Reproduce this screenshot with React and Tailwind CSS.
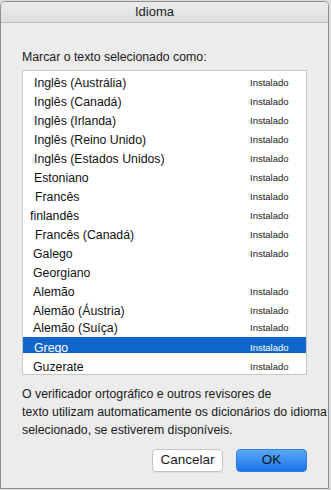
import React from 'react';

const languages = [
  { name: 'Inglês (Austrália)', installed: true, pad: 'pl-[11px]' },
  { name: 'Inglês (Canadá)', installed: true, pad: 'pl-[11px]' },
  { name: 'Inglês (Irlanda)', installed: true, pad: 'pl-[11px]' },
  { name: 'Inglês (Reino Unido)', installed: true, pad: 'pl-[11px]' },
  { name: 'Inglês (Estados Unidos)', installed: true, pad: 'pl-[11px]' },
  { name: 'Estoniano', installed: true, pad: 'pl-[11px]' },
  { name: 'Francês', installed: true, pad: 'pl-[12px]' },
  { name: 'finlandês', installed: true, pad: 'pl-[7px]' },
  { name: 'Francês (Canadá)', installed: true, pad: 'pl-[12px]' },
  { name: 'Galego', installed: true, pad: 'pl-[10px]' },
  { name: 'Georgiano', installed: false, pad: 'pl-[10px]' },
  { name: 'Alemão', installed: true, pad: 'pl-[10px]' },
  { name: 'Alemão (Áustria)', installed: true, pad: 'pl-[10px]' },
  { name: 'Alemão (Suíça)', installed: true, pad: 'pl-[10px]', row: 'h-[17px] pb-[1px]' },
  { name: 'Grego', installed: true, pad: 'pl-[11px]', selected: true, row: 'h-[16px] pt-[6px]' },
  { name: 'Guzerate', installed: true, pad: 'pl-[10px]', row: 'h-[21px] pt-[6px]' },
];

const App = () => {
  return (
    <div
      className="w-[331px] h-[490px] bg-[#dcdcdc] pt-[1px] pr-[2px] pb-[1px]"
      style={{ fontFamily: '"Liberation Sans", Arial, sans-serif' }}
    >
      <div className="h-full flex flex-col bg-[#ececec] border border-[#8e8e8e] rounded-t-[5px] overflow-hidden">
        {/* Title bar */}
        <div className="h-[21px] flex items-center justify-center pr-[20px] bg-gradient-to-b from-[#ececec] to-[#dedede] border-b border-[#b9b9b9] text-[13px] text-[#222]">
          Idioma
        </div>

        <div className="flex flex-col px-[21px]">
          <div className="mt-[26px] text-[12.3px] text-[#1a1a1a] leading-[16px] whitespace-nowrap">
            Marcar o texto selecionado como:
          </div>

          {/* List */}
          <div className="mt-[5px] h-[305px] bg-white border border-[#c6c6c6] overflow-hidden pt-[2px]">
            {languages.map((lang) => (
              <div
                key={lang.name}
                className={`flex items-center justify-between pr-[17px] ${lang.pad} ${lang.row || 'h-[19px]'} ${
                  lang.selected ? 'bg-[#0f67cc] text-white' : 'text-[#111]'
                }`}
              >
                <span className="text-[12.3px] leading-[16px] whitespace-nowrap">{lang.name}</span>
                {lang.installed && (
                  <span className={`w-[39px] text-[9.5px] leading-[12px] ${lang.selected ? 'text-white' : 'text-[#222]'}`}>
                    Instalado
                  </span>
                )}
              </div>
            ))}
          </div>

          <p className="mt-[10px] text-[12.3px] leading-[18px] text-[#1a1a1a] whitespace-nowrap">
            O verificador ortográfico e outros revisores de
            <br />
            texto utilizam automaticamente os dicionários do idioma
            <br />
            selecionado, se estiverem disponíveis.
          </p>

          {/* Buttons */}
          <div className="mt-[10px] flex justify-end gap-[13px]">
            <button className="w-[71px] h-[23px] bg-white border border-[#c3c3c3] rounded-[4px] text-[13.5px] text-[#1a1a1a] shadow-[0_1px_0_rgba(0,0,0,0.05)]">
              Cancelar
            </button>
            <button className="w-[71px] h-[23px] bg-gradient-to-b from-[#5aa8f8] to-[#1a73ea] border border-[#2f7fe6] rounded-[4px] text-[13.5px] text-[#111]">
              OK
            </button>
          </div>
        </div>
      </div>
    </div>
  );
};

export default App;
